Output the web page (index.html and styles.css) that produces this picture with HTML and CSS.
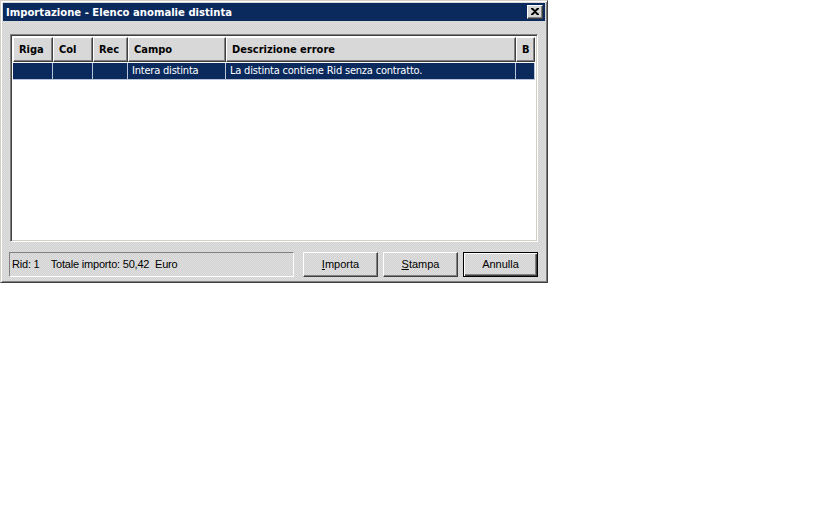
FILE: index.html
```html
<!DOCTYPE html>
<html>
	<head>
		<meta charset="UTF-8">
		<title>Importazione - Elenco anomalie distinta</title>
		<link rel="stylesheet" href="styles.css">
	</head>
	<body>
		<div class="window">
			<div class="titlebar">
				<span class="title">Importazione - Elenco anomalie distinta</span>
				<div class="close">
					<svg width="8" height="7" viewBox="0 0 8 7">
						<path d="M0 0h2l2 2 2-2h2v1L5 3.5 8 6v1H6L4 5 2 7H0V6l3-2.5L0 1z" fill="#000"/>
					</svg>
				</div>
			</div>
			<div class="content">
				<div class="grid">
					<div class="head">
						<div class="hcell">Riga</div>
						<div class="hcell">Col</div>
						<div class="hcell">Rec</div>
						<div class="hcell">Campo</div>
						<div class="hcell">Descrizione errore</div>
						<div class="hcell">B</div>
					</div>
					<div class="row sel">
						<div class="cell"></div>
						<div class="cell"></div>
						<div class="cell"></div>
						<div class="cell">Intera distinta</div>
						<div class="cell">La distinta contiene Rid senza contratto.</div>
						<div class="cell"></div>
					</div>
				</div>
				<div class="bottom">
					<div class="status">Rid: 1&nbsp;&nbsp;&nbsp; Totale importo: 50,42&nbsp; Euro</div>
					<div class="btns">
						<div class="btn"><u>I</u>mporta</div>
						<div class="btn"><u>S</u>tampa</div>
						<div class="btn def">Annulla</div>
					</div>
				</div>
			</div>
		</div>
	</body>
</html>
```

FILE: styles.css
```css
* {
	margin: 0;
	padding: 0;
	box-sizing: border-box;
}

body {
	background: #fff;
	font-family: "DejaVu Sans Condensed", "DejaVu Sans", sans-serif;
	font-size: 11px;
}

.window {
	width: 548px;
	height: 283px;
	padding: 2px;
	border: 1px solid;
	border-color: #d4d0c8 #404040 #404040 #d4d0c8;
	box-shadow: inset 1px 1px #fff, inset -1px -1px #808080;
	background: repeating-conic-gradient(#d2d2d2 0 25%, #dfdfdf 0 50%) 0 0 / 2px 2px;
}

.titlebar {
	height: 18px;
	background: #0a2a5e;
	display: flex;
	align-items: center;
	justify-content: space-between;
	padding-left: 3px;
	padding-right: 2px;
}

.title {
	color: #fff;
	font-weight: bold;
	font-size: 11.2px;
}

.close {
	width: 16px;
	height: 14px;
	background: #d6d6d6;
	border: 1px solid;
	border-color: #fff #404040 #404040 #fff;
	box-shadow: inset -1px -1px #808080;
	display: flex;
	align-items: center;
	justify-content: center;
	padding-bottom: 1px;
}

.content {
	padding: 13px 7px 0 7px;
}

.grid {
	height: 208px;
	background: #fff;
	border: 1px solid;
	border-color: #808080 #fff #fff #808080;
	box-shadow: inset 1px 1px #404040, inset -1px -1px #d4d0c8;
	padding: 2px;
}

.head,
.row {
	display: grid;
	grid-template-columns: 40px 40px 35px 98px 290px 1fr;
}

.hcell {
	height: 25px;
	line-height: 23px;
	padding-left: 5px;
	font-weight: bold;
	background: #d8d8d8;
	border: 1px solid;
	border-color: #fff #404040 #404040 #fff;
	box-shadow: inset -1px -1px #808080;
}

.row {
	height: 17px;
	line-height: 16px;
	margin-top: 1px;
}

.cell {
	padding-left: 4px;
	border-right: 1px solid #b8c4d8;
	white-space: nowrap;
	overflow: hidden;
	letter-spacing: -0.2px;
}

.sel {
	background: #0a2a5e;
	color: #fff;
	border-bottom: 1px solid #b8c4d8;
}

.bottom {
	display: flex;
	justify-content: space-between;
	margin-top: 10px;
}

.status {
	width: 285px;
	height: 25px;
	margin-left: -1px;
	border: 1px solid;
	border-color: #808080 #fff #fff #808080;
	line-height: 23px;
	padding-left: 2px;
	font-family: "Liberation Sans", Arial, sans-serif;
	font-size: 11px;
	letter-spacing: -0.2px;
	color: #000;
}

.btns {
	display: flex;
	gap: 5px;
}

.btn {
	width: 75px;
	height: 25px;
	line-height: 22px;
	text-align: center;
	font-family: "Liberation Sans", Arial, sans-serif;
	font-size: 11px;
	border: 1px solid;
	border-color: #fff #404040 #404040 #fff;
	box-shadow: inset -1px -1px #808080;
}

.def {
	border: 1px solid #000;
	box-shadow: inset 1px 1px #fff, inset -1px -1px #404040, inset -2px -2px #808080;
}
```
